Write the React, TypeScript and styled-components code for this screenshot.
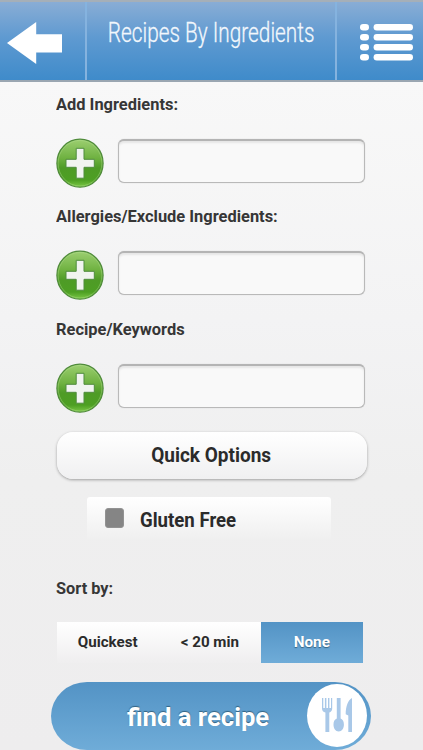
import React from "react";
import styled, { createGlobalStyle } from "styled-components";

const GlobalStyle = createGlobalStyle`
  * { box-sizing: border-box; }
  html, body { margin: 0; padding: 0; overflow: hidden; }
  body { font-family: Roboto, "Liberation Sans", sans-serif; color: #363636; }
  button { font-family: inherit; border: 0; padding: 0; margin: 0; background: none; color: inherit; }
`;

const Screen = styled.div`
  width: 423px;
  height: 750px;
  overflow: hidden;
  background: linear-gradient(#f8f8f8 80px, #f3f3f4 320px, #efefef 480px, #eeedee 750px);
`;

const Header = styled.header`
  display: grid;
  grid-template-columns: 87px 250px 86px;
  height: 82px;
  border-top: 2px solid #a5afb8;
  border-bottom: 2px solid #9aa6b1;
  background: linear-gradient(#89add5, #5f9ad1 45%, #3f8bca);
`;

const HeaderButton = styled.button`
  display: flex;
  align-items: center;
`;

const BackButton = styled(HeaderButton)`
  border-right: 2px solid #85b3df;
  padding: 4px 0 0 7px;
`;

const MenuButton = styled(HeaderButton)`
  padding: 2px 0 0 23px;
`;

const Title = styled.h1`
  margin: 0;
  display: flex;
  justify-content: center;
  border-right: 2px solid #85b3df;
  color: #f2f7fc;
  font-size: 27px;
  font-weight: 300;
  line-height: 32px;
  padding-top: 15px;
  white-space: nowrap;
  -webkit-text-stroke: 0.3px #f2f7fc;
`;

const Fit = styled.span<{ $x: number; $left?: boolean }>`
  display: inline-block;
  white-space: nowrap;
  transform: scaleX(${(p) => p.$x});
  transform-origin: ${(p) => (p.$left ? "left" : "center")};
`;

const Form = styled.main`
  display: flex;
  flex-direction: column;
  padding: 12px 56px 0;
`;

const Field = styled.section`
  height: 112.3px;
`;

const Label = styled.div`
  height: 20px;
  line-height: 20px;
  font-size: 17px;
  font-weight: 700;
`;

const FieldRow = styled.div`
  display: flex;
  gap: 14px;
  margin-top: 24px;
`;

const AddButton = styled.button`
  display: block;
  width: 48px;
  height: 50px;
`;

const TextInput = styled.input`
  width: 247px;
  height: 44px;
  margin-top: 1px;
  border: 1.5px solid #b9b9b9;
  border-top: 2px solid #b4b4b4;
  border-radius: 6px;
  background: #f9f9f9;
  box-shadow: inset 0 2px 2px #e6e6e6, 0 0 1px #c4c4c4;
  outline: 0;
`;

const QuickButton = styled.button`
  height: 47px;
  margin: 1px 0 0 0.5px;
  width: 310px;
  border-radius: 16px;
  background: linear-gradient(#fff, #f0f0f1);
  box-shadow: 0 1px 3px rgba(0, 0, 0, 0.34);
  font-size: 20px;
  font-weight: 700;
  line-height: 47px;
  color: #2b2b2b;
`;

const CheckOption = styled.label`
  display: flex;
  align-items: center;
  width: 244px;
  height: 43px;
  margin: 18px 0 38px 31px;
  padding: 3px 0 0 18px;
  gap: 16px;
  border-radius: 3px 3px 0 0;
  background: linear-gradient(#fff, #efefef);
  font-size: 20px;
  font-weight: 700;
  color: #2b2b2b;
`;

const CheckBox = styled.span`
  width: 19px;
  height: 20px;
  margin-top: -3px;
  border-radius: 3px;
  background: #858585;
  border: 1px solid #929292;
`;

const Segments = styled.div`
  display: grid;
  grid-template-columns: 102px 102px 102px;
  width: 306px;
  height: 41px;
  margin: 24px 0 19px 1px;
  background: linear-gradient(#fff, #efeeef);
`;

const Segment = styled.button<{ $active?: boolean }>`
  font-size: 15px;
  font-weight: 700;
  color: ${(p) => (p.$active ? "#fff" : "#2b2b2b")};
  background: ${(p) => (p.$active ? "linear-gradient(#5393c5, #6facd8)" : "none")};
  text-shadow: ${(p) => (p.$active ? "0 1px 1px #35617f" : "none")};
`;

const FindButton = styled.button`
  display: flex;
  align-items: center;
  justify-content: space-between;
  width: 320px;
  height: 68px;
  flex: none;
  margin-left: -5px;
  padding: 0 4px 1px 76px;
  border-radius: 36px / 34px;
  background: linear-gradient(#5393c5, #6facd8);
  color: #fff;
  font-size: 26px;
  font-weight: 700;
  text-shadow: 0 -1px 1px #34617f;
`;

const FindText = styled.span`
  padding-top: 3px;
`;

const Badge = styled.span`
  display: grid;
  place-items: center;
  width: 60px;
  height: 63px;
  border-radius: 50%;
  background: #fff;
`;

const PlusIcon = ({ id }: { id: string }) => (
  <svg width="48" height="50" viewBox="0 0 48 50">
    <defs>
      <linearGradient id={id} x1="0" y1="0" x2="0" y2="1">
        <stop offset="0" stopColor="#9ccf71" />
        <stop offset="0.4" stopColor="#6eb140" />
        <stop offset="0.6" stopColor="#4e9b26" />
        <stop offset="0.85" stopColor="#4d9f23" />
        <stop offset="1" stopColor="#7cc947" />
      </linearGradient>
    </defs>
    <ellipse cx="24" cy="25.2" rx="23.1" ry="24" fill={`url(#${id})`} stroke="#4f8b3a" strokeWidth="1.2" />
    <ellipse cx="24" cy="25.2" rx="21.9" ry="22.8" fill="none" stroke="#b5df91" strokeOpacity=".4" />
    <path d="M20.2 10.300h7.800v11h10.300v8H28v10.900h-7.800V29.300H10v-8h10.200z" fill="#f1f4f0" stroke="#4f8d3d" strokeWidth="1" />
  </svg>
);

const BackIcon = () => (
  <svg width="56" height="44" viewBox="0 0 56 44">
    <path d="M0 22 29.2 1v12.3H55v18.2H29.2V43z" fill="#fff" />
  </svg>
);

const ListIcon = () => (
  <svg width="54" height="38" viewBox="0 0 54 38" fill="#fff">
    {[1, 11, 21, 31].map((y) => (
      <g key={y}>
        <rect x="0" y={y} width="9" height="6.400" rx="3.200" />
        <rect x="13.600" y={y} width="39.400" height="6.400" rx="3.200" />
      </g>
    ))}
  </svg>
);

const CutleryIcon = () => (
  <svg width="32" height="36" viewBox="0 0 32 36" fill="#a9c8e8">
    <path d="M1 1h1.300v10h1.600V1h1.500v10H7V1h1.400v10H10V1h1.200v10.500c0 2.200-1.200 3.400-2.900 4V35H4.400V15.500C2.400 15 1 13.700 1 11.500z" />
    <path d="M15.800 1h3.800v20.500c2.400 1 3.300 3.300 3.300 6 0 3.900-2 7-5.200 7s-5.200-3.100-5.200-7c0-2.700.9-5 3.300-6z" />
    <path d="M31 1v34h-3.700V18.500l-2.600-1.200C24.700 9.500 27 3 31 1z" />
  </svg>
);

const fields = [
  { id: "add", text: "Add Ingredients:" },
  { id: "exclude", text: "Allergies/Exclude Ingredients:" },
  { id: "keywords", text: "Recipe/Keywords" },
];

export default function App() {
  return (
    <>
      <GlobalStyle />
      <Screen>
        <Header>
          <BackButton aria-label="Back"><BackIcon /></BackButton>
          <Title><Fit $x={0.77}>Recipes By Ingredients</Fit></Title>
          <MenuButton aria-label="Menu"><ListIcon /></MenuButton>
        </Header>
        <Form>
          {fields.map((f) => (
            <Field key={f.id}>
              <Label><Fit $x={0.966} $left>{f.text}</Fit></Label>
              <FieldRow>
                <AddButton aria-label="Add"><PlusIcon id={f.id} /></AddButton>
                <TextInput aria-label={f.text} />
              </FieldRow>
            </Field>
          ))}
          <QuickButton><Fit $x={0.95}>Quick Options</Fit></QuickButton>
          <CheckOption>
            <CheckBox />
            <Fit $x={0.93} $left>Gluten Free</Fit>
          </CheckOption>
          <Label><Fit $x={0.96} $left>Sort by:</Fit></Label>
          <Segments>
            <Segment><Fit $x={1.01}>Quickest</Fit></Segment>
            <Segment><Fit $x={1.01}>&lt; 20 min</Fit></Segment>
            <Segment $active><Fit $x={1.02}>None</Fit></Segment>
          </Segments>
          <FindButton>
            <FindText><Fit $x={0.985} $left>find a recipe</Fit></FindText>
            <Badge><CutleryIcon /></Badge>
          </FindButton>
        </Form>
      </Screen>
    </>
  );
}
